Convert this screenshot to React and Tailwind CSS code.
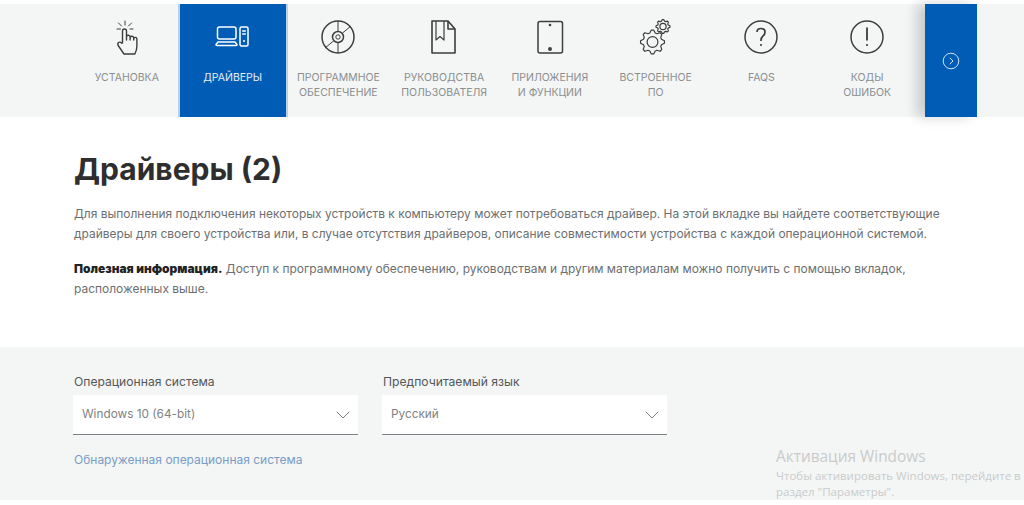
import { ChevronDown } from "lucide-react";

// icons are all drawn on a 40x40 box
const HandIcon = () => (
  <svg viewBox="0 0 40 40" className="w-10 h-10" fill="none" stroke="currentColor" strokeLinejoin="round" strokeLinecap="round">
    <path d="M18 4v4M11.500 6l3 3M10 12h3.500M24.500 6l-3 3M23 12h3" strokeWidth="1" />
    <path d="M15.500 26V14a2 2 0 0 1 4 0v9v-3a1.800 1.800 0 0 1 3.600 0v3v-2a1.800 1.800 0 0 1 3.600 0v2v-1a1.600 1.600 0 0 1 3.200 0v7q0 4-2 8H17l-5.500-8q-1.500-2.500 0-3.500 1.500-1 3 .5z" strokeWidth="1.400" />
  </svg>
);

const DriversIcon = () => (
  <svg viewBox="0 0 40 40" className="w-10 h-10" fill="none" stroke="currentColor" strokeWidth="1.500" strokeLinejoin="round">
    <rect x="4.500" y="10" width="18.500" height="12" rx="2" />
    <path d="M5 25h17l2 2.500q0 1-1 1H4q-1 0-1-1z" />
    <rect x="27" y="10" width="8" height="19" rx="1.500" />
    <path d="M29.200 14h3.600M29.200 17h3.600M31 23v2" />
  </svg>
);

const DiscIcon = () => (
  <svg viewBox="0 0 40 40" className="w-10 h-10" fill="none" stroke="currentColor" strokeWidth="1.500">
    <circle cx="20" cy="20" r="16" />
    <circle cx="20" cy="20" r="5.500" />
    <circle cx="20" cy="20" r="2.200" strokeWidth="1" />
    <path d="M20 4v10.500M20 25.500V36M7 31l8.500-7M24.500 16L33 9" strokeWidth="1" />
  </svg>
);

const ManualIcon = () => (
  <svg viewBox="0 0 40 40" className="w-10 h-10" fill="none" stroke="currentColor" strokeWidth="1.600" strokeLinejoin="round">
    <path d="M8 4h16l7 8v24H8z" />
    <path d="M24 4v8h7" />
    <path d="M12 4v19l4-3.500 4 3.500V4" strokeWidth="1.200" />
  </svg>
);

const TabletIcon = () => (
  <svg viewBox="0 0 40 40" className="w-10 h-10" fill="none" stroke="currentColor" strokeWidth="1.500" strokeLinejoin="round">
    <rect x="8" y="4.500" width="24.500" height="31.500" rx="2" />
    <circle cx="20" cy="8" r="0.600" fill="currentColor" />
    <circle cx="20" cy="32" r="1.200" fill="currentColor" />
  </svg>
);

const Gear = ({ cx, cy, r, teeth }) => {
  // cog outline computed from the tooth count
  const pts = [];
  for (let i = 0; i < teeth * 4; i++) {
    const a = ((i - 0.5) / (teeth * 4)) * Math.PI * 2;
    const rad = i % 4 < 2 ? r : r * 0.78;
    pts.push(`${(cx + Math.cos(a) * rad).toFixed(2)},${(cy + Math.sin(a) * rad).toFixed(2)}`);
  }
  return (
    <g>
      <polygon points={pts.join(" ")} />
      <circle cx={cx} cy={cy} r={r * 0.45} />
    </g>
  );
};

const GearsIcon = () => (
  <svg viewBox="0 0 40 40" className="w-10 h-10" fill="none" stroke="currentColor" strokeWidth="1.200" strokeLinejoin="round">
    <Gear cx={16.500} cy={25} r={12} teeth={8} />
    <Gear cx={27} cy={9.500} r={7} teeth={8} />
  </svg>
);

const FaqIcon = () => (
  <svg viewBox="0 0 40 40" className="w-10 h-10" fill="none" stroke="currentColor" strokeWidth="1.500">
    <circle cx="20" cy="20" r="16" />
    <path d="M16 15q0-3.500 4-3.500t4 3.500q0 2.500-2 4t-2 5" strokeWidth="1.700" />
    <circle cx="20" cy="28" r="1.100" fill="currentColor" stroke="none" />
  </svg>
);

const AlertIcon = () => (
  <svg viewBox="0 0 40 40" className="w-10 h-10" fill="none" stroke="currentColor" strokeWidth="1.500">
    <circle cx="20" cy="20" r="16" />
    <path d="M20 10.500v13" strokeWidth="1.800" />
    <circle cx="20" cy="28" r="1.100" fill="currentColor" stroke="none" />
  </svg>
);

const tabs = [
  { label: ["УСТАНОВКА"], icon: <HandIcon /> },
  { label: ["ДРАЙВЕРЫ"], icon: <DriversIcon />, active: true },
  { label: ["ПРОГРАММНОЕ", "ОБЕСПЕЧЕНИЕ"], icon: <DiscIcon /> },
  { label: ["РУКОВОДСТВА", "ПОЛЬЗОВАТЕЛЯ"], icon: <ManualIcon /> },
  { label: ["ПРИЛОЖЕНИЯ", "И ФУНКЦИИ"], icon: <TabletIcon /> },
  { label: ["ВСТРОЕННОЕ", "ПО"], icon: <GearsIcon /> },
  { label: ["FAQS"], icon: <FaqIcon /> },
  { label: ["КОДЫ", "ОШИБОК"], icon: <AlertIcon /> },
];

const Select = ({ label, value }) => (
  <div className="w-[285px]">
    <div className="pl-px text-[12.150px] leading-[15px] text-[#55585a]">{label}</div>
    <div className="mt-[6px] h-[40px] bg-white border-b border-[#7d8389] flex items-center justify-between pl-[9px] pr-[3px]">
      <span className="pt-px text-[11.800px] text-[#808284]">{value}</span>
      <ChevronDown className="w-[24px] h-[24px] text-[#666a6e]" strokeWidth={0.9} />
    </div>
  </div>
);

export default function App() {
  return (
    <div className="h-[505px] bg-white overflow-hidden font-['Inter','Noto_Sans',sans-serif]">
      <div className="h-[4px]" />
      <div className="h-[113px] bg-[#f4f6f5] flex pl-[74px]">
        {tabs.map((tab) => (
          <div
            key={tab.label[0]}
            className={`w-[105.750px] shrink-0 flex flex-col items-center pt-[13px] ${
              tab.active ? "bg-[#005cb5] text-white shadow-[-2px_0_0_#b9d0e8,2px_0_0_#b9d0e8]" : "text-[#3d3d3d]"
            }`}
          >
            {tab.icon}
            <div className={`mt-[14px] text-[10.500px] leading-[14.500px] text-center whitespace-nowrap ${tab.active ? "text-[#e6eef7]" : "text-[#8b8e90]"}`}>
              {tab.label.map((line) => (
                <div key={line}>{line}</div>
              ))}
            </div>
          </div>
        ))}
        <div className="ml-[5px] w-[52px] shrink-0 bg-[#005cb5] flex items-center justify-center shadow-[-8px_0_12px_rgba(0,0,0,0.18)]">
          <svg viewBox="0 0 18 18" className="w-[18px] h-[18px]" fill="none" stroke="#cfe0f2" strokeWidth="1">
            <circle cx="9" cy="9" r="7.800" />
            <path d="M7.800 5.800L11 9l-3.200 3.200" />
          </svg>
        </div>
      </div>

      <div className="pl-[74px] pr-[80px] pt-[34px] h-[230px]">
        <h1 className="text-[30px] leading-[36px] font-bold text-[#2e2e2e]">Драйверы (2)</h1>
        <p className="mt-[17px] text-[11.970px] leading-[19.500px] text-[#6c6f71] w-[880px]">
          Для выполнения подключения некоторых устройств к компьютеру может потребоваться драйвер. На этой вкладке вы найдете соответствующие драйверы для своего устройства или, в случае отсутствия драйверов, описание совместимости устройства с каждой операционной системой.
        </p>
        <p className="mt-[16px] text-[11.970px] leading-[19.500px] text-[#6c6f71] w-[880px]">
          <strong className="font-black text-[#222222]">Полезная информация.</strong> Доступ к программному обеспечению, руководствам и другим материалам можно получить с помощью вкладок, расположенных выше.
        </p>
      </div>

      <div className="relative h-[153px] bg-[#f4f6f5] pl-[73px] pt-[27px]">
        <div className="flex gap-[24px]">
          <Select label="Операционная система" value="Windows 10 (64-bit)" />
          <Select label="Предпочитаемый язык" value="Русский" />
        </div>
        <a className="block pl-px mt-[17px] text-[12px] leading-[15px] text-[#7a9cc6]">Обнаруженная операционная система</a>

        {/* windows activation watermark sits over the page */}
        <div className="absolute left-[776px] top-[100px] w-[248px] font-['Open_Sans',sans-serif] text-[#c9cbcc] whitespace-nowrap">
          <div className="text-[15.400px] leading-[20px]">Активация Windows</div>
          <div className="text-[11.500px] leading-[17px]">Чтобы активировать Windows, перейдите в</div>
          <div className="text-[11.500px] leading-[16px]">раздел "Параметры".</div>
        </div>
      </div>
    </div>
  );
}
